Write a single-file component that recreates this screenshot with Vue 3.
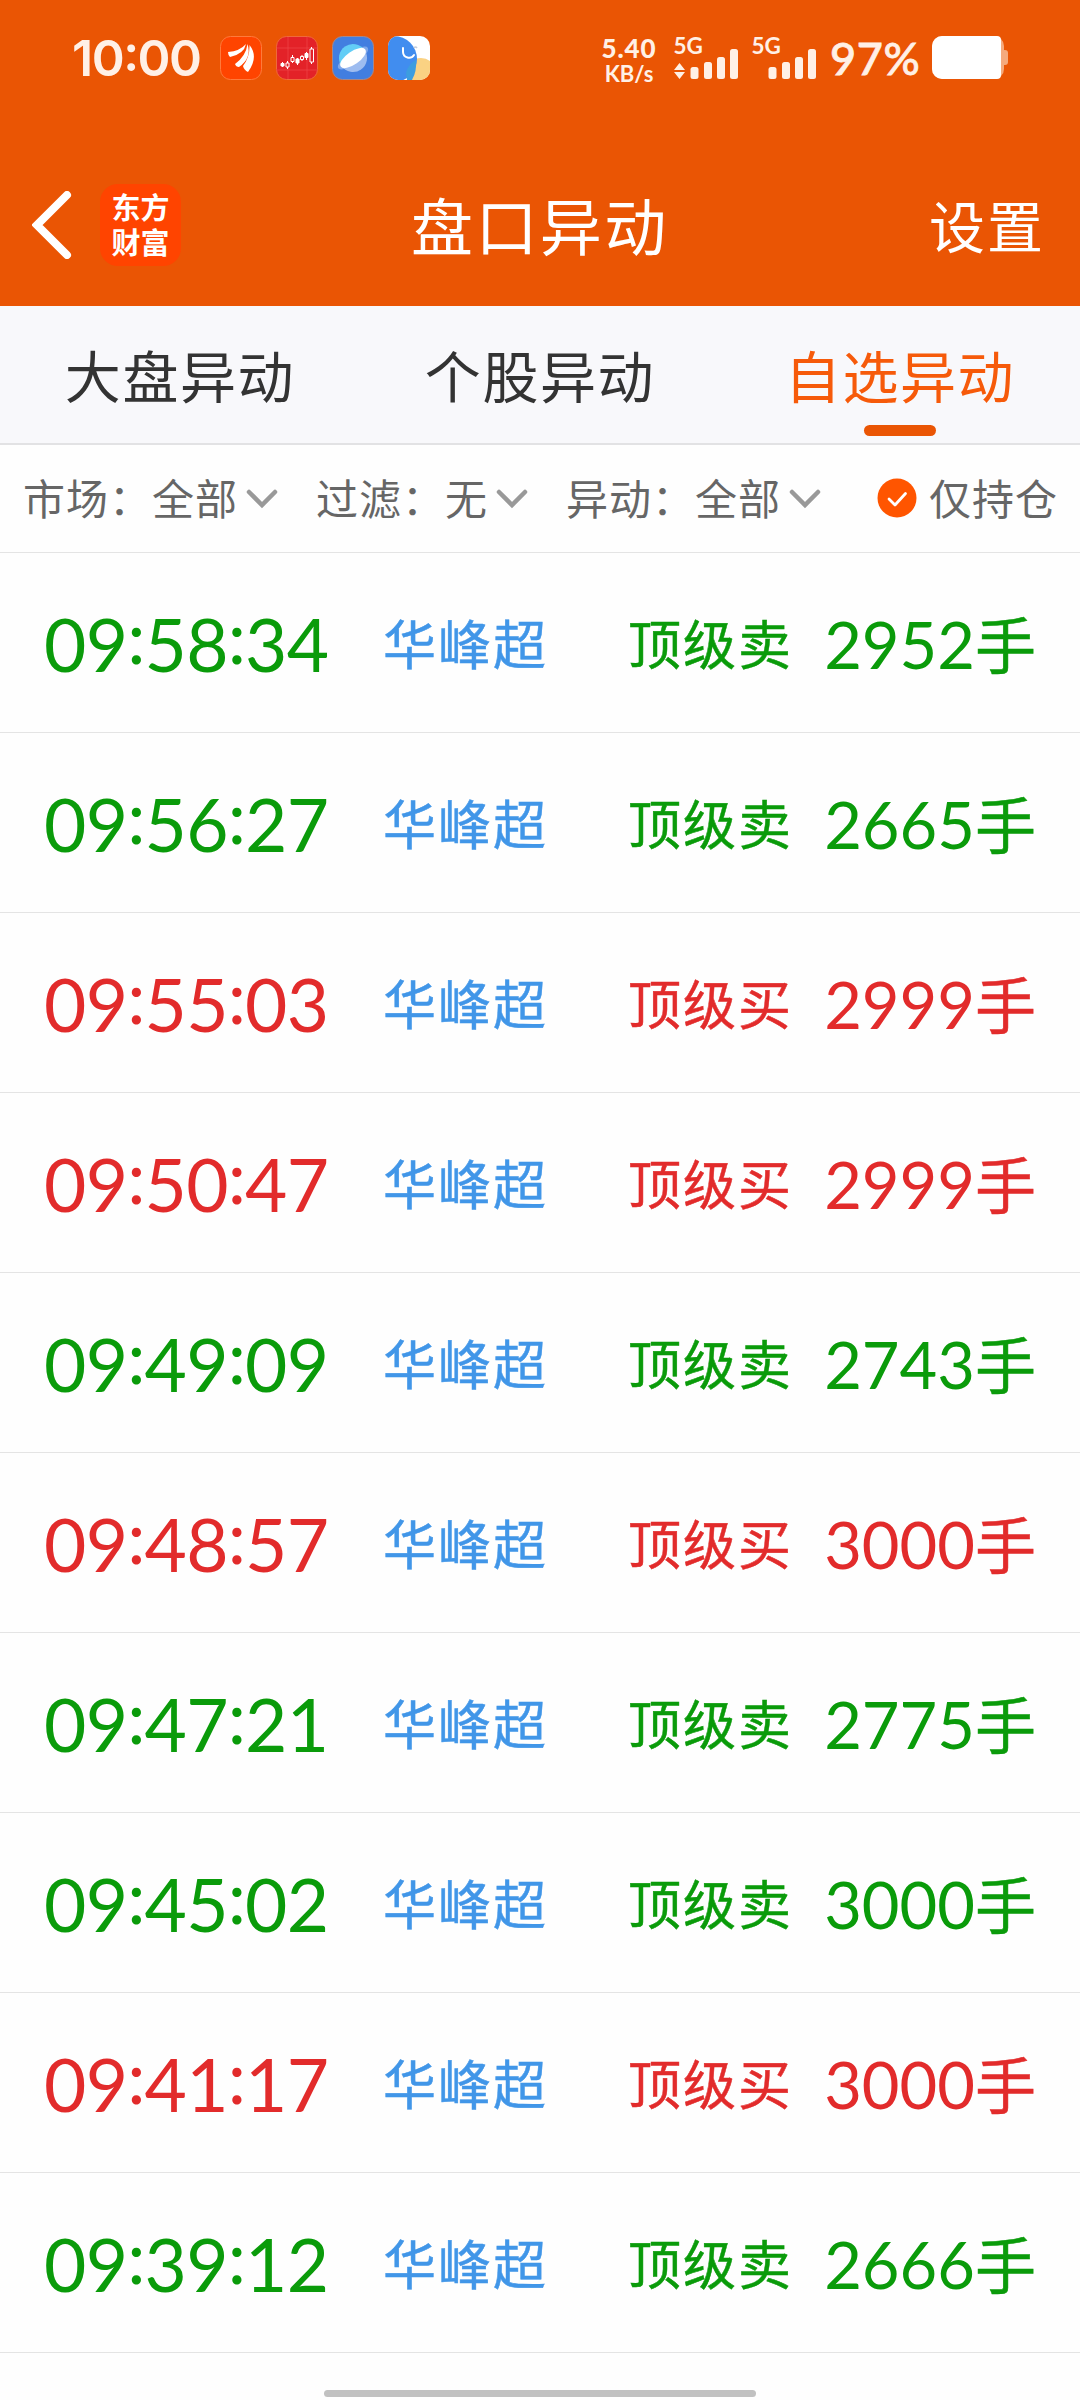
<template>
  <div class="page">
    <header class="top">
      <div class="status">
        <span class="status__clock">10<i class="colon">:</i>00</span>
        <div class="status__apps">
          <svg viewBox="0 0 42 44" class="app-ico">
            <rect x="0.5" y="0.5" width="41" height="43" rx="10" fill="#ff4400" stroke="#ff7a3c" />
            <g fill="#fff">
              <path d="M8 16 Q20 15 26 8 Q24 18 10 21 Q8 19 8 16 Z" />
              <path d="M15 28 Q26 20 27.500 8 Q32 22 19 31 Q16 31 15 28 Z" />
              <path d="M23 30 Q30 21 29.500 9 Q39 21 28 36 Q24 34 23 30 Z" />
            </g>
          </svg>
          <svg viewBox="0 0 42 44" class="app-ico">
            <rect x="0.5" y="0.5" width="41" height="43" rx="10" fill="#e32228" stroke="#f0683c" />
            <path d="M0 12H42M0 34H42M12 1V43M31 1V43" stroke="#ee4548" stroke-width="0.7" />
            <g stroke="#fff" stroke-width="1">
              <path d="M6.500 26V31M11.500 25V33M16.500 19V27M21.500 22V29M26 19V25M30.500 16V24M35.500 11V28" />
              <path d="M10 27h3v4h-3zM15 21.500h3v4h-3zM24.500 20.500h3v3h-3zM34 13h3.500v13h-3.500z" fill="#e32228" />
              <path d="M5 27.500h3v2.500h-3zM20 23h3v4h-3zM29 17.500h3v4h-3z" fill="#fff" />
            </g>
          </svg>
          <svg viewBox="0 0 42 44" class="app-ico">
            <rect x="0.5" y="0.5" width="41" height="43" rx="10" fill="#427ee0" stroke="#a4888c" />
            <ellipse cx="21" cy="22" rx="18" ry="6" transform="rotate(-35 21 22)" fill="#7fa8ea" />
            <path d="M9.500 30A14 14 0 0 1 32.500 14Z" fill="#62cdf6" />
            <path d="M9.500 30A14 14 0 0 0 32.500 14Z" fill="#9dbcf0" />
            <ellipse cx="21" cy="22" rx="15" ry="6.500" transform="rotate(-35 21 22)" fill="#fff" />
          </svg>
          <svg viewBox="0 0 42 44" class="app-ico">
            <defs><clipPath id="tile"><rect width="42" height="44" rx="10" /></clipPath></defs>
            <g clip-path="url(#tile)">
              <rect width="42" height="44" fill="#fff" />
              <circle cx="33" cy="37" r="15" fill="#fad283" />
              <circle cx="6" cy="23" r="23" fill="#418def" />
              <path d="M18 37 Q20 28 28 24 Q29 35 24 44 H19 Z" fill="#3c9de0" />
              <path d="M15 12 V16 A6 6 0 0 0 26 19" fill="none" stroke="#fff" stroke-width="2" stroke-linecap="round" />
              <path d="M26 12 Q27.500 10 29 12" fill="none" stroke="#c5ccd8" stroke-width="1.500" />
            </g>
          </svg>
        </div>
        <div class="status__right">
          <div class="speed"><b>5.40</b><span>KB/s</span></div>
          <svg v-for="n in 2" :key="n" viewBox="0 0 66 46" class="signal" fill="#fff0e6">
            <text x="-0.5" y="18.500" font-size="22.500" font-weight="700">5G</text>
            <path v-if="n === 1" d="M0 35L5.500 28L11 35ZM0 37H11L5.500 44Z" />
            <rect x="16.500" y="32" width="8" height="12" rx="2.500" />
            <rect x="30" y="27" width="8" height="17" rx="2.500" />
            <rect x="43" y="22" width="8" height="22" rx="2.500" />
            <rect x="56" y="14" width="8" height="30" rx="2.500" />
          </svg>
          <span class="percent">97%</span>
          <svg viewBox="0 0 76 44" class="battery">
            <rect width="72" height="43" rx="10" fill="#f5aa7d" />
            <rect x="68" y="14" width="8" height="15" rx="3" fill="#f5aa7d" />
            <path d="M10 0H65A4 4 0 0 1 69 4V39A4 4 0 0 1 65 43H10A10 10 0 0 1 0 33V10A10 10 0 0 1 10 0Z" fill="#fff" />
          </svg>
        </div>
      </div>
      <nav class="nav">
        <svg viewBox="0 0 40 68" class="nav__back">
          <path d="M35 4L5 34L35 64" fill="none" stroke="#fff" stroke-width="8" stroke-linecap="round" />
        </svg>
        <div class="nav__logo"><span>东方</span><span>财富</span></div>
        <h1 class="nav__title">盘口异动</h1>
        <span class="nav__set">设置</span>
      </nav>
    </header>

    <div class="tabs">
      <div
        v-for="(tab, i) in tabs"
        :key="tab"
        class="tab"
        :class="{ 'tab--active': i === 2 }"
      >{{ tab }}</div>
    </div>

    <div class="filters">
      <div v-for="f in filters" :key="f.label" class="filter">
        <span>{{ f.label }}：{{ f.value }}</span>
        <svg viewBox="0 0 32 20" class="filter__arrow">
          <path d="M3 3L16 16L29 3" fill="none" stroke="#999" stroke-width="4.500" stroke-linecap="round" />
        </svg>
      </div>
      <div class="hold">
        <svg viewBox="0 0 40 40" class="hold__check">
          <circle cx="20" cy="20" r="19.500" fill="#ff5500" />
          <path d="M12 21L18 27L28.500 15.500" fill="none" stroke="#fff" stroke-width="2.800" stroke-linecap="round" stroke-linejoin="round" />
        </svg>
        <span>仅持仓</span>
      </div>
    </div>

    <ul class="list">
      <li v-for="row in rows" :key="row.time" class="row" :class="`row--${row.side}`">
        <span class="row__time">
          <template v-for="(part, i) in row.time.split(':')" :key="i"><i v-if="i" class="colon">:</i>{{ part }}</template>
        </span>
        <span class="row__name">华峰超</span>
        <span class="row__type">{{ row.side === 'sell' ? '顶级卖' : '顶级买' }}</span>
        <span class="row__vol">{{ row.vol }}<em>手</em></span>
      </li>
    </ul>
    <div class="home-bar"></div>
  </div>
</template>

<script setup>
const tabs = ['大盘异动', '个股异动', '自选异动']

const filters = [
  { label: '市场', value: '全部' },
  { label: '过滤', value: '无' },
  { label: '异动', value: '全部' },
]

const rows = [
  { time: '09:58:34', side: 'sell', vol: 2952 },
  { time: '09:56:27', side: 'sell', vol: 2665 },
  { time: '09:55:03', side: 'buy',  vol: 2999 },
  { time: '09:50:47', side: 'buy',  vol: 2999 },
  { time: '09:49:09', side: 'sell', vol: 2743 },
  { time: '09:48:57', side: 'buy',  vol: 3000 },
  { time: '09:47:21', side: 'sell', vol: 2775 },
  { time: '09:45:02', side: 'sell', vol: 3000 },
  { time: '09:41:17', side: 'buy',  vol: 3000 },
  { time: '09:39:12', side: 'sell', vol: 2666 },
]
</script>

<style>
body { margin: 0; background: #fefefe; }
</style>

<style scoped>
.page {
  width: 1080px;
  height: 2400px;
  overflow: hidden;
  position: relative;
  background: #fefefe;
  font-family: Lato, "Noto Sans CJK SC", sans-serif;
}
.colon { font-style: normal; vertical-align: 0.11em; line-height: 0; }
.top { height: 306px; background: #ea5504; color: #fff; }

.status {
  height: 116px;
  box-sizing: border-box;
  padding-left: 72px;
  display: flex;
  align-items: center;
  color: #fff0e6;
}
.status__clock {
  width: 148px;
  font: 600 50px/1 Inter, sans-serif;
  letter-spacing: -1.5px;
  white-space: nowrap;
}
.status__apps { display: flex; gap: 14px; }
.app-ico { width: 42px; height: 44px; display: block; }
.status__right { display: flex; align-items: center; margin-left: 169px; }
.speed {
  width: 60px;
  display: flex;
  flex-direction: column;
  align-items: center;
  padding-top: 3px;
  font-weight: 700;
  font-size: 22px;
  line-height: 23px;
}
.speed b { font-size: 26px; line-height: 27px; letter-spacing: 0.9px; }
.signal { width: 66px; height: 46px; margin-left: 15px; display: block; overflow: visible; }
.signal + .signal { margin-left: 12px; }
.percent {
  width: 92px;
  margin-left: 12px;
  font-size: 45px;
  font-weight: 500;
  line-height: 1;
  letter-spacing: 0.6px;
  -webkit-text-stroke: 0.8px currentColor;
}
.battery { width: 76px; height: 44px; margin-left: 10px; margin-bottom: 1px; }

.nav { height: 140px; padding: 40px 35px 0 32px; display: flex; align-items: flex-start; }
.nav__back { width: 40px; height: 68px; margin-top: 35px; }
.nav__logo {
  width: 81px;
  height: 82px;
  margin: 28px 0 0 28px;
  border-radius: 18px;
  background: #ff4400;
  display: flex;
  flex-direction: column;
  align-items: center;
  justify-content: center;
  font-size: 29px;
  font-weight: 700;
  line-height: 35px;
}
.nav__title { margin: 26px 0 0 230px; font-size: 62px; font-weight: 400; letter-spacing: 2.4px; line-height: 90px; }
.nav__set { margin: 26px 0 0 auto; font-size: 56px; letter-spacing: 2px; line-height: 90px; }

.tabs {
  height: 137px;
  display: flex;
  background: #f8f8fb;
  border-bottom: 2px solid #e2e2e4;
}
.tab {
  flex: 1;
  position: relative;
  text-align: center;
  font-size: 56px;
  letter-spacing: 1.6px;
  line-height: 142px;
  color: #333;
}
.tab--active { color: #f65a0a; }
.tab--active::after {
  content: '';
  position: absolute;
  left: 144px;
  bottom: 7px;
  width: 72px;
  height: 11px;
  border-radius: 6px;
  background: #ea5504;
}

.filters {
  height: 107px;
  padding: 0 22px 0 23px;
  display: flex;
  align-items: center;
  border-bottom: 1px solid #e4e4e4;
  font-size: 42px;
  letter-spacing: 1px;
  line-height: 110px;
  color: #666;
  white-space: nowrap;
}
.filter { display: flex; align-items: center; margin-right: 38px; }
.filter__arrow { width: 32px; height: 20px; margin-left: 8px; }
.hold { display: flex; align-items: center; margin-left: auto; }
.hold__check { width: 40px; height: 40px; margin: 0 12px 2px 0; }

.list { margin: 0; padding: 0; list-style: none; }
.row {
  height: 180px;
  box-sizing: border-box;
  padding: 3px 44px 0 44px;
  display: flex;
  align-items: center;
  border-bottom: 1px solid #e4e4e4;
  white-space: nowrap;
}
.row--sell { color: #0a9b0a; }
.row--buy { color: #e22b2b; }
.row__time { width: 339px; font-size: 73px; letter-spacing: -0.7px; line-height: 176px; }
.row__time .colon { letter-spacing: -1px; }
.row__name { width: 245px; color: #4196e8; }
.row__name,
.row__type { font-size: 53px; letter-spacing: 2px; line-height: 176px; padding-top: 2px; }
.row__name,
.row__type,
.row__vol em { -webkit-text-stroke: 0.5px currentColor; }
.row__vol { margin-left: auto; padding-top: 2px; font-size: 65px; line-height: 176px; }
.row__vol em { font-style: normal; font-size: 61px; }

.home-bar {
  position: absolute;
  left: 324px;
  bottom: 3px;
  width: 432px;
  height: 7px;
  border-radius: 4px;
  background: #c1c1c1;
}
</style>
